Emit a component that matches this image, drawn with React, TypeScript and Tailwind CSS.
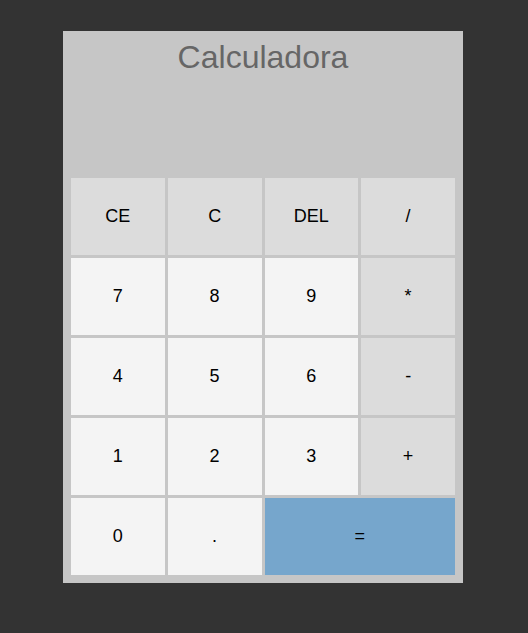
import React from "react";

const keys = [
  { label: "CE", kind: "op" },
  { label: "C", kind: "op" },
  { label: "DEL", kind: "op" },
  { label: "/", kind: "op" },
  { label: "7", kind: "num" },
  { label: "8", kind: "num" },
  { label: "9", kind: "num" },
  { label: "*", kind: "op" },
  { label: "4", kind: "num" },
  { label: "5", kind: "num" },
  { label: "6", kind: "num" },
  { label: "-", kind: "op" },
  { label: "1", kind: "num" },
  { label: "2", kind: "num" },
  { label: "3", kind: "num" },
  { label: "+", kind: "op" },
  { label: "0", kind: "num" },
  { label: ".", kind: "num" },
  { label: "=", kind: "eq" },
];

const App = () => {
  return (
    <div className="min-h-[633px] w-full bg-[#333333] pt-[31px] font-['Liberation_Sans',Arial,sans-serif]">
      <div className="ml-[63px] w-[400px] bg-[#c6c6c6] px-2 pb-2">
        <div className="h-[147px]">
          <h1 className="pt-[7px] text-center text-[32px] leading-[38px] text-[#666666]">
            Calculadora
          </h1>
        </div>
        <div className="grid grid-cols-4 gap-[3px]">
          {keys.map((k) => (
            <button
              key={k.label}
              className={
                k.kind === "eq"
                  ? "col-span-2 h-[77px] bg-[#76a6cc] text-[18px] text-black"
                  : k.kind === "op"
                  ? "h-[77px] bg-[#dcdcdc] text-[18px] text-black"
                  : "h-[77px] bg-[#f4f4f4] text-[18px] text-black"
              }
            >
              {k.label}
            </button>
          ))}
        </div>
      </div>
    </div>
  );
};

export default App;
